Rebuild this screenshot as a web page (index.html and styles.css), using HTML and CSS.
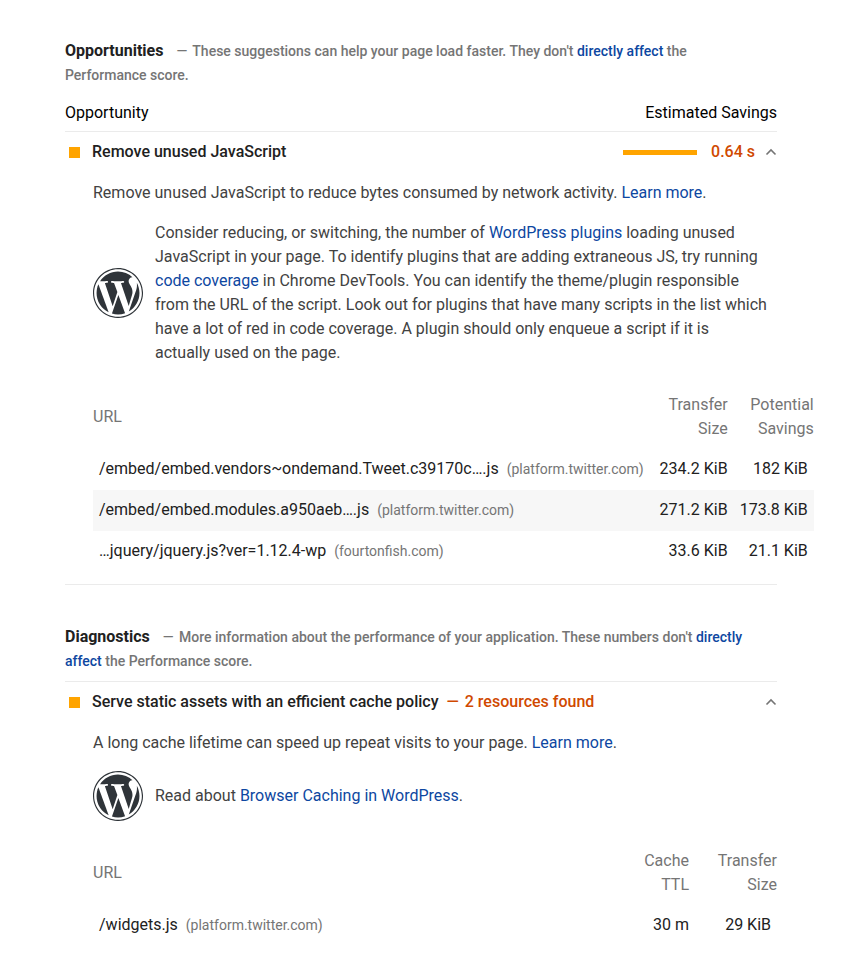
FILE: index.html
```html
<!DOCTYPE html>
<html lang="en">
<head>
<meta charset="utf-8">
<meta name="viewport" content="width=device-width, initial-scale=1">
<title>Performance audits</title>
<link rel="stylesheet" href="styles.css">
</head>
<body>
<svg class="sprite" aria-hidden="true">
  <symbol id="wordpress" viewBox="0 0 122.5 122.5">
    <path d="M8.708 61.26c0 20.802 12.089 38.779 29.619 47.298L13.258 39.872C10.342 46.408 8.708 53.641 8.708 61.26z"/>
    <path d="M96.74 58.608c0-6.495-2.333-10.993-4.334-14.494-2.664-4.329-5.161-7.995-5.161-12.324 0-4.831 3.664-9.328 8.825-9.328.233 0 .454.029.681.042-9.35-8.566-21.807-13.796-35.489-13.796-18.36 0-34.513 9.42-43.91 23.688 1.233.037 2.395.063 3.382.063 5.497 0 14.006-.667 14.006-.667 2.833-.167 3.167 3.994.337 4.329 0 0-2.847.335-6.015.501L48.2 93.547l11.501-34.493-8.188-22.434c-2.83-.166-5.511-.501-5.511-.501-2.832-.166-2.5-4.496.332-4.329 0 0 8.679.667 13.843.667 5.496 0 14.006-.667 14.006-.667 2.835-.167 3.168 3.994.337 4.329 0 0-2.853.335-6.015.501l18.992 56.494 5.242-17.517C95.011 68.328 96.74 62.984 96.74 58.608z"/>
    <path d="M62.184 65.857l-15.768 45.819c4.708 1.384 9.687 2.141 14.846 2.141 6.12 0 11.989-1.058 17.452-2.979-.141-.225-.269-.464-.374-.724z"/>
    <path d="M107.376 36.046c.226 1.674.354 3.471.354 5.404 0 5.333-.996 11.328-3.996 18.824l-16.053 46.413c15.624-9.111 26.133-26.038 26.133-45.426.001-9.137-2.333-17.729-6.438-25.215z"/>
    <path d="M61.262 0C27.483 0 0 27.481 0 61.26c0 33.783 27.483 61.263 61.262 61.263 33.778 0 61.265-27.48 61.265-61.263C122.526 27.481 95.04 0 61.262 0zm0 119.715c-32.23 0-58.453-26.223-58.453-58.455 0-32.23 26.222-58.451 58.453-58.451 32.229 0 58.45 26.221 58.45 58.451 0 32.232-26.221 58.455-58.45 58.455z"/>
  </symbol>
  <symbol id="chevron" viewBox="0 0 12 12">
    <path d="M1.5 8.5 6 4l4.5 4.5"/>
  </symbol>
</svg>
<main class="report">
  <section class="group">
    <header class="group-header">
      <h2 class="group-title">Opportunities</h2>
      <p class="group-description"><span class="dash">—</span> These suggestions can help your page load faster. They don't <a href="#">directly affect</a> the Performance score.</p>
    </header>
    <div class="load-header">
      <span>Opportunity</span>
      <span>Estimated Savings</span>
    </div>
    <details class="audit" open>
      <summary class="audit-header">
        <span class="audit-icon"></span>
        <span class="audit-title">Remove unused JavaScript</span>
        <span class="savings-bar"></span>
        <span class="savings-value">0.64 s</span>
        <svg class="chevron" aria-hidden="true"><use href="#chevron"/></svg>
      </summary>
      <div class="audit-body">
        <p>Remove unused JavaScript to reduce bytes consumed by network activity. <a href="#">Learn more</a>.</p>
        <div class="stack-pack">
          <svg class="stack-logo" role="img" aria-label="WordPress"><use href="#wordpress"/></svg>
          <p>Consider reducing, or switching, the number of <a href="#">WordPress plugins</a> loading unused JavaScript in your page. To identify plugins that are adding extraneous JS, try running <a href="#">code coverage</a> in Chrome DevTools. You can identify the theme/plugin responsible from the URL of the script. Look out for plugins that have many scripts in the list which have a lot of red in code coverage. A plugin should only enqueue a script if it is actually used on the page.</p>
        </div>
        <table class="details-table">
          <thead>
            <tr><th scope="col">URL</th><th scope="col">Transfer Size</th><th scope="col">Potential Savings</th></tr>
          </thead>
          <tbody>
            <tr><td>/embed/embed.vendors~ondemand.Tweet.c39170c….js <span class="host">(platform.twitter.com)</span></td><td>234.2 KiB</td><td>182 KiB</td></tr>
            <tr><td>/embed/embed.modules.a950aeb….js <span class="host">(platform.twitter.com)</span></td><td>271.2 KiB</td><td>173.8 KiB</td></tr>
            <tr><td>…jquery/jquery.js?ver=1.12.4-wp <span class="host">(fourtonfish.com)</span></td><td>33.6 KiB</td><td>21.1 KiB</td></tr>
          </tbody>
        </table>
      </div>
    </details>
  </section>

  <section class="group">
    <header class="group-header">
      <h2 class="group-title">Diagnostics</h2>
      <p class="group-description"><span class="dash">—</span> More information about the performance of your application. These numbers don't <a href="#">directly affect</a> the Performance score.</p>
    </header>
    <details class="audit" open>
      <summary class="audit-header">
        <span class="audit-icon"></span>
        <span class="audit-title">Serve static assets with an efficient cache policy <span class="audit-note"><span class="dash">—</span> 2 resources found</span></span>
        <svg class="chevron" aria-hidden="true"><use href="#chevron"/></svg>
      </summary>
      <div class="audit-body">
        <p>A long cache lifetime can speed up repeat visits to your page. <a href="#">Learn more</a>.</p>
        <div class="stack-pack">
          <svg class="stack-logo" role="img" aria-label="WordPress"><use href="#wordpress"/></svg>
          <p>Read about <a href="#">Browser Caching in WordPress</a>.</p>
        </div>
        <table class="details-table">
          <colgroup><col><col class="col-ttl"><col class="col-size"></colgroup>
          <thead>
            <tr><th scope="col">URL</th><th scope="col">Cache TTL</th><th scope="col">Transfer Size</th></tr>
          </thead>
          <tbody>
            <tr><td>/widgets.js <span class="host">(platform.twitter.com)</span></td><td>30 m</td><td>29 KiB</td></tr>
          </tbody>
        </table>
      </div>
    </details>
  </section>
</main>
</body>
</html>
```
FILE: styles.css
```css
* {
  box-sizing: border-box;
}

body {
  margin: 0;
  background: #fff;
  color: #212121;
  font: 16px/24px Roboto, "Liberation Sans", sans-serif;
}

p,
h2 {
  margin: 0;
}

a {
  color: #0d47a1;
  text-decoration: none;
}

.sprite {
  display: none;
}

.report {
  display: flex;
  flex-direction: column;
  gap: 40px;
  padding: 39px 65px 0;
}

.group-header {
  margin-bottom: 8px;
  padding-right: 16px;
}

.group-title,
.group-description {
  display: inline;
}

.group-title {
  margin-right: 9px;
  font-size: 16px;
  font-weight: 700;
}

.group-description {
  color: #757575;
  font-size: 14px;
  font-weight: 500;
}

.dash {
  margin-right: 2px;
}

.load-header {
  display: flex;
  justify-content: space-between;
  padding: 6px 0;
  color: #000;
}

.audit {
  border-top: 1px solid #ebebeb;
}

.group:first-child .audit {
  border-bottom: 1px solid #ebebeb;
}

.audit-header {
  display: flex;
  align-items: center;
  padding: 8px 0;
  font-weight: 500;
  list-style: none;
  cursor: pointer;
}

.audit-icon {
  width: 11px;
  height: 11px;
  margin: 0 12px 0 4px;
  background: #ffa400;
}

.audit-title {
  flex: 1;
}

.audit-note {
  margin-left: 4px;
  color: #d04900;
}

.savings-bar {
  width: 74px;
  height: 5px;
  background: #ffa400;
}

.savings-value {
  margin-left: 14px;
  color: #d04900;
}

.chevron {
  width: 12px;
  height: 12px;
  margin-left: 10px;
  fill: none;
  stroke: #757575;
  stroke-width: 1.6;
}

.audit-body {
  display: flex;
  flex-direction: column;
  gap: 16px;
  padding: 9px 0 12px 28px;
  color: #424242;
}

.stack-pack {
  display: flex;
  align-items: center;
  gap: 12px;
  padding-right: 9px;
}

.stack-logo {
  flex: none;
  width: 50px;
  height: 50px;
  fill: #2f3439;
}

.details-table {
  width: 100%;
  margin-top: 4px;
  border-collapse: collapse;
  color: #212121;
}

.details-table th {
  padding: 8px 6px;
  color: #757575;
  font-weight: 400;
  text-align: right;
}

.details-table td {
  padding: 8px 6px 9px;
  text-align: right;
  white-space: nowrap;
}

.details-table th:first-child {
  padding-left: 0;
}

.details-table th:last-child {
  padding-right: 0;
}

.details-table th:first-child,
.details-table td:first-child {
  padding-right: 10px;
  text-align: left;
}

.details-table tbody tr:nth-child(even) {
  background: #f7f7f7;
}

.col-ttl {
  width: 70px;
}

.col-size {
  width: 82px;
}

.host {
  margin-left: 4px;
  color: #757575;
  font-size: 14px;
}
```
